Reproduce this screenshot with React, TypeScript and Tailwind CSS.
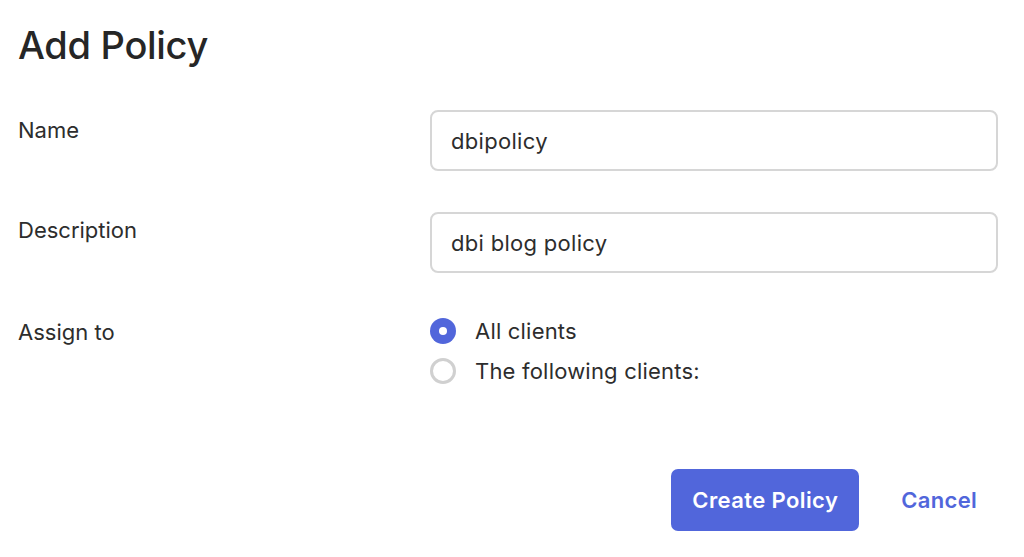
import React, { useState } from 'react';

const Radio: React.FC<{ checked: boolean; label: string; onSelect: () => void }> = ({ checked, label, onSelect }) => (
    <label className="flex items-center gap-[19px] cursor-pointer" onClick={onSelect}>
        {checked ? (
            <span className="w-[26px] h-[26px] rounded-full bg-[#5166db] flex items-center justify-center">
                <span className="w-[8px] h-[8px] rounded-full bg-white"></span>
            </span>
        ) : (
            <span className="w-[26px] h-[26px] rounded-full border-[3px] border-[#d0d0d0] bg-white"></span>
        )}
        <span className="text-[22px] leading-[40px] tracking-[0.2px] text-[#2d2d2d]">{label}</span>
    </label>
);

const App: React.FC = () => {
    const [name, setName] = useState('dbipolicy');
    const [description, setDescription] = useState('dbi blog policy');
    const [assign, setAssign] = useState<'all' | 'some'>('all');

    return (
        <div className="w-[1024px] h-[557px] bg-white pl-[18px] pr-[26px] font-['Inter',sans-serif] text-[#2d2d2d] overflow-hidden">
            <h1 className="pt-[22px] text-[38px] leading-[46px] font-medium tracking-[-0.3px] text-[#262626]">Add Policy</h1>

            <div className="mt-[42px] grid grid-cols-[412px_1fr] gap-y-[41px]">
                <div className="pt-[5px] text-[22px] leading-[30px]">Name</div>
                <input
                    value={name}
                    onChange={e => setName(e.target.value)}
                    className="h-[61px] w-full rounded-[8px] border-2 border-[#d6d6d6] px-[19px] text-[22px] tracking-[0.3px] text-[#2d2d2d] outline-none"
                />

                <div className="pt-[3px] text-[22px] leading-[30px]">Description</div>
                <input
                    value={description}
                    onChange={e => setDescription(e.target.value)}
                    className="h-[61px] w-full rounded-[8px] border-2 border-[#d6d6d6] px-[19px] text-[22px] tracking-[0.3px] text-[#2d2d2d] outline-none"
                />

                <div className="pt-[3px] text-[22px] leading-[30px]">Assign to</div>
                <div className="-mt-[3px] flex flex-col">
                    <Radio checked={assign === 'all'} label="All clients" onSelect={() => setAssign('all')} />
                    <Radio checked={assign === 'some'} label="The following clients:" onSelect={() => setAssign('some')} />
                </div>
            </div>

            <div className="mt-[78px] flex items-center justify-end gap-[42px] pr-[21px]">
                <button className="h-[62px] w-[188px] rounded-[7px] bg-[#5166db] text-[22px] font-semibold tracking-[0.4px] text-white">Create Policy</button>
                <button className="text-[22px] font-semibold tracking-[0.3px] text-[#5166db]">Cancel</button>
            </div>
        </div>
    );
};

export default App;
